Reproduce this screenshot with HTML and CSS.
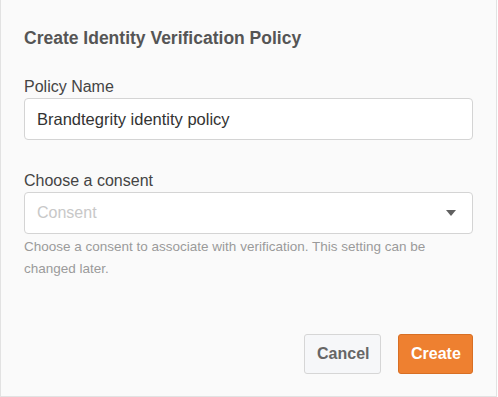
FILE: index.html
```html
<!DOCTYPE html>
<html>
<head>
<meta charset="utf-8">
<title>Create Identity Verification Policy</title>
<link rel="stylesheet" href="styles.css">
</head>
<body>
<div class="modal">
  <h2 class="modalTitle">Create Identity Verification Policy</h2>

  <div class="field">
    <label class="fieldLabel">Policy Name</label>
    <div class="textBox">Brandtegrity identity policy</div>
  </div>

  <div class="field fieldConsent">
    <label class="fieldLabel">Choose a consent</label>
    <div class="textBox selectBox">
      <span class="placeholder">Consent</span>
      <svg class="caret" width="10" height="6" viewBox="0 0 10 6"><path d="M0 0H10L5 6Z" fill="#606060"/></svg>
    </div>
    <p class="helpText">Choose a consent to associate with verification. This setting can be changed later.</p>
  </div>

  <div class="modalFooter">
    <button class="btn btnCancel">Cancel</button>
    <button class="btn btnCreate">Create</button>
  </div>
</div>
</body>
</html>
```

FILE: styles.css
```css
body {
  margin: 0;
  background: #ffffff;
  font-family: "Liberation Sans", Arial, sans-serif;
}

.modal {
  width: 497px;
  height: 397px;
  box-sizing: border-box;
  background: #fafafa;
  border-left: 1px solid #e2e2e2;
  border-right: 1px solid #e2e2e2;
  border-bottom: 1px solid #e2e2e2;
  padding: 28px 23px 0 23px;
}

.modalTitle {
  margin: 0;
  font-size: 17.5px;
  line-height: 20px;
  font-weight: bold;
  color: #555555;
}

.field {
  margin-top: 29px;
}

.fieldConsent {
  margin-top: 31px;
}

.fieldLabel {
  display: block;
  font-size: 16px;
  line-height: 20px;
  color: #444444;
  margin-bottom: 1px;
}

.textBox {
  height: 42px;
  box-sizing: border-box;
  background: #ffffff;
  border: 1px solid #d4d4d4;
  border-radius: 4px;
  padding: 0 12px;
  display: flex;
  align-items: center;
  font-size: 16.5px;
  color: #333333;
}

.selectBox {
  justify-content: space-between;
  padding-right: 16px;
}

.placeholder {
  color: #c8c8c8;
  font-size: 16px;
}

.helpText {
  margin: 2px 0 0 0;
  max-width: 425px;
  font-size: 13.5px;
  line-height: 22px;
  color: #9a9a9a;
}

.modalFooter {
  display: flex;
  justify-content: flex-end;
  gap: 17px;
  margin-top: 54px;
}

.btn {
  height: 40px;
  box-sizing: border-box;
  border-radius: 3px;
  padding: 0 12px;
  font-family: "Liberation Sans", Arial, sans-serif;
  font-size: 16px;
  font-weight: bold;
}

.btnCancel {
  width: 77px;
  background: #f6f7f9;
  border: 1px solid #d6d6d6;
  color: #666666;
}

.btnCreate {
  width: 75px;
  background: #ee8030;
  border: 1px solid #d86f24;
  color: #ffffff;
}
```
